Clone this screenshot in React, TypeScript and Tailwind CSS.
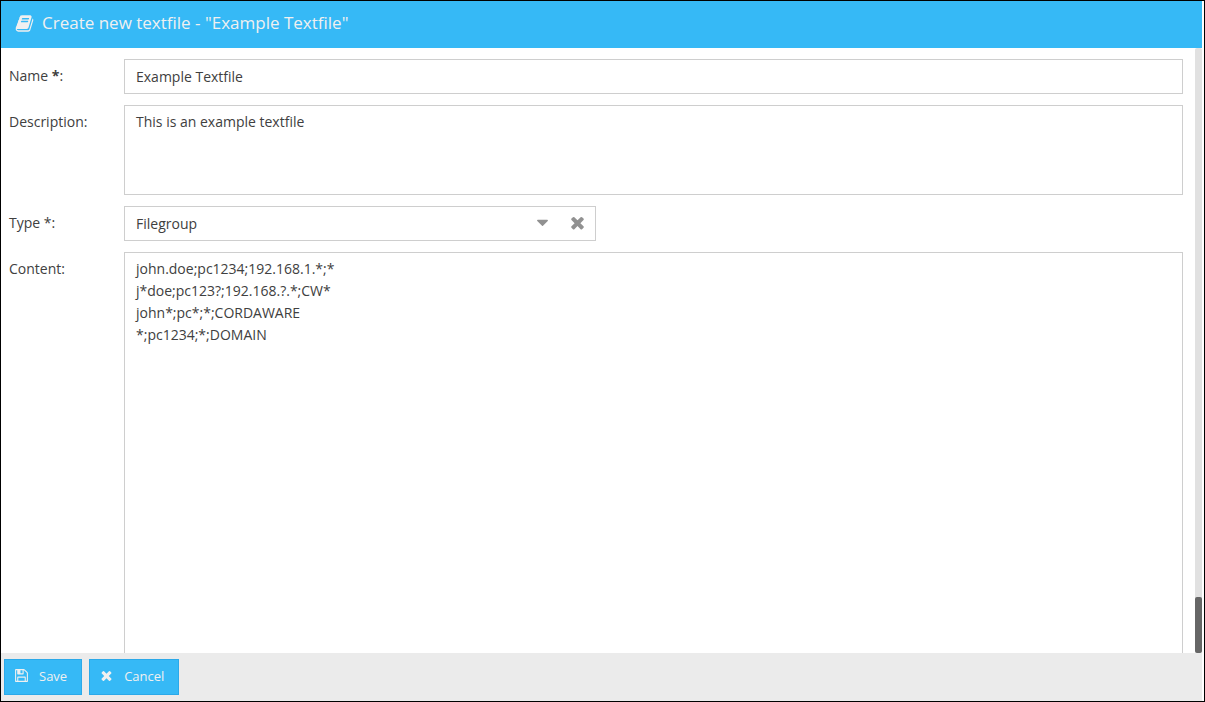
import { useState } from "react";

const icons = {
  book: "M1703 478q40 57 18 129l-275 906q-19 64-76.500 107.500t-122.500 43.500h-923q-77 0-148.500-53.500t-99.500-131.500q-24-67-2-127 0-4 3-27t4-37q1-8-3-21.500t-3-19.500q2-11 8-21t16.500-23.500 16.500-23.500q23-38 45-91.500t30-91.500q3-10 .5-30t-.5-28q3-11 17-28t17-23q21-36 42-92t25-90q1-9-2.500-32t.5-28q4-13 22-30.500t22-22.500q19-26 42.500-84.500t27.500-96.500q1-8-3-25.500t-2-26.500q2-8 9-18t18-23 17-21q8-12 16.500-30.500t15-35 16-36 19.500-32 26.500-23.500 36-11.500 47.500 5.500l-1 3q38-9 51-9h761q74 0 114 56t18 130l-274 906q-36 119-71.500 153.500t-128.500 34.500h-869q-27 0-38 15-11 16-1 43 24 70 144 70h923q29 0 56-15.500t35-41.500l300-987q7-22 5-57 38 15 59 43zm-1064 2q-4 13 2 22.500t20 9.500h608q13 0 25.500-9.500t16.500-22.500l21-64q4-13-2-22.500t-20-9.500h-608q-13 0-25.500 9.500t-16.500 22.500zm-83 256q-4 13 2 22.500t20 9.500h608q13 0 25.500-9.500t16.500-22.500l21-64q4-13-2-22.500t-20-9.500h-608q-13 0-25.500 9.500t-16.500 22.500z",
  times: "M1490 1322q0 40-28 68l-136 136q-28 28-68 28t-68-28l-294-294-294 294q-28 28-68 28t-68-28l-136-136q-28-28-28-68t28-68l294-294-294-294q-28-28-28-68t28-68l136-136q28-28 68-28t68 28l294 294 294-294q28-28 68-28t68 28l136 136q28 28 28 68t-28 68l-294 294 294 294q28 28 28 68z",
  save: "M512 1536h768v-384h-768v384zm896 0h128v-896q0-14-10-38.500t-20-34.500l-281-281q-10-10-34-20t-39-10v416q0 40-28 68t-68 28h-576q-40 0-68-28t-28-68v-416h-128v1280h128v-416q0-40 28-68t68-28h832q40 0 68 28t28 68v416zm-384-928v-320q0-13-9.500-22.500t-22.500-9.500h-192q-13 0-22.500 9.500t-9.500 22.500v320q0 13 9.500 22.500t22.500 9.500h192q13 0 22.500-9.500t9.500-22.500zm640 32v928q0 40-28 68t-68 28h-1344q-40 0-68-28t-28-68v-1344q0-40 28-68t68-28h928q40 0 88 20t76 48l280 280q28 28 48 76t20 88z",
  caret: "M1408 704q0 26-19 45l-448 448q-19 19-45 19t-45-19l-448-448q-19-19-19-45t19-45 45-19h896q26 0 45 19t19 45z",
};

function Icon({ name, className }: { name: keyof typeof icons; className?: string }) {
  return (
    <svg viewBox="0 0 1792 1792" fill="currentColor" aria-hidden="true" className={className}>
      <path d={icons[name]} />
    </svg>
  );
}

function Field({ id, label, children }: { id: string; label: React.ReactNode; children: React.ReactNode }) {
  return (
    <div className="flex items-start">
      <label htmlFor={id} className="w-[115px] shrink-0 pt-1.5">
        {label}
      </label>
      {children}
    </div>
  );
}

const inputClass = "block min-w-0 flex-1 border border-[#cecece] bg-white px-[11px] outline-none focus:border-[#36b9f6]";
const buttonClass =
  "flex h-9 items-center gap-2.5 border border-[#2ba9e9] bg-[#36b9f6] pr-3.5 pb-[3px] pl-[9px] text-[13px] text-[#f0f0f0] hover:bg-[#2ba9e9]";

export default function App() {
  const [name, setName] = useState("Example Textfile");
  const [description, setDescription] = useState("This is an example textfile");
  const [type, setType] = useState("filegroup");
  const [content, setContent] = useState(
    "john.doe;pc1234;192.168.1.*;*\nj*doe;pc123?;192.168.?.*;CW*\njohn*;pc*;*;CORDAWARE\n*;pc1234;*;DOMAIN"
  );

  return (
    <form
      onSubmit={(e) => e.preventDefault()}
      className="flex h-screen flex-col border border-black bg-white pr-0.5 font-['Open_Sans',sans-serif] text-sm leading-[22px] text-[#404040]"
    >
      <header className="flex h-[47px] shrink-0 items-center gap-2 bg-[#36b9f6] px-3.5 pb-[3px] text-[#f0f0f0]">
        <Icon name="book" className="size-[19px]" />
        <h1 className="text-[17px]">Create new textfile - "{name}"</h1>
      </header>

      <div className="flex min-h-0 flex-1">
        <div className="flex flex-1 flex-col gap-[11px] overflow-hidden pt-[11px] pr-3 pl-2">
          <Field id="name" label={<>Name <b>*</b>:</>}>
            <input
              id="name"
              type="text"
              value={name}
              onChange={(e) => setName(e.target.value)}
              className={`${inputClass} h-[35px]`}
              required
            />
          </Field>

          <Field id="description" label="Description:">
            <textarea
              id="description"
              value={description}
              onChange={(e) => setDescription(e.target.value)}
              className={`${inputClass} h-[90px] resize-none py-[5px]`}
            />
          </Field>

          <Field id="type" label="Type *:">
            <div className="flex h-[35px] w-[472px] border border-[#cecece]">
              <div className="relative flex flex-1">
                <select
                  id="type"
                  value={type}
                  onChange={(e) => setType(e.target.value)}
                  className="flex-1 appearance-none bg-transparent pr-9 pl-[11px] outline-none"
                >
                  <option value=""></option>
                  <option value="filegroup">Filegroup</option>
                </select>
                <Icon name="caret" className="pointer-events-none absolute top-1.5 right-2 size-[19px] text-[#919191]" />
              </div>
              <button
                type="button"
                aria-label="Clear type"
                onClick={() => setType("")}
                className="flex w-[35px] items-center justify-center pb-0.5 text-[#919191]"
              >
                <Icon name="times" className="size-[19px]" />
              </button>
            </div>
          </Field>

          <Field id="content" label="Content:">
            <textarea
              id="content"
              value={content}
              onChange={(e) => setContent(e.target.value)}
              className={`${inputClass} h-[480px] resize-none py-[5px]`}
            />
          </Field>
        </div>

        {/* scroll track */}
        <div className="flex w-[7px] shrink-0 flex-col justify-end rounded-xs bg-[#e1e1e1]">
          <div className="h-14 rounded-xs bg-[#666666]" />
        </div>
      </div>

      <footer className="flex shrink-0 gap-[7px] bg-[#ebebeb] px-[3px] py-1.5">
        <button type="submit" className={buttonClass}>
          <Icon name="save" className="size-[15px]" />
          Save
        </button>
        <button type="button" className={buttonClass}>
          <Icon name="times" className="size-[15px]" />
          Cancel
        </button>
      </footer>
    </form>
  );
}
